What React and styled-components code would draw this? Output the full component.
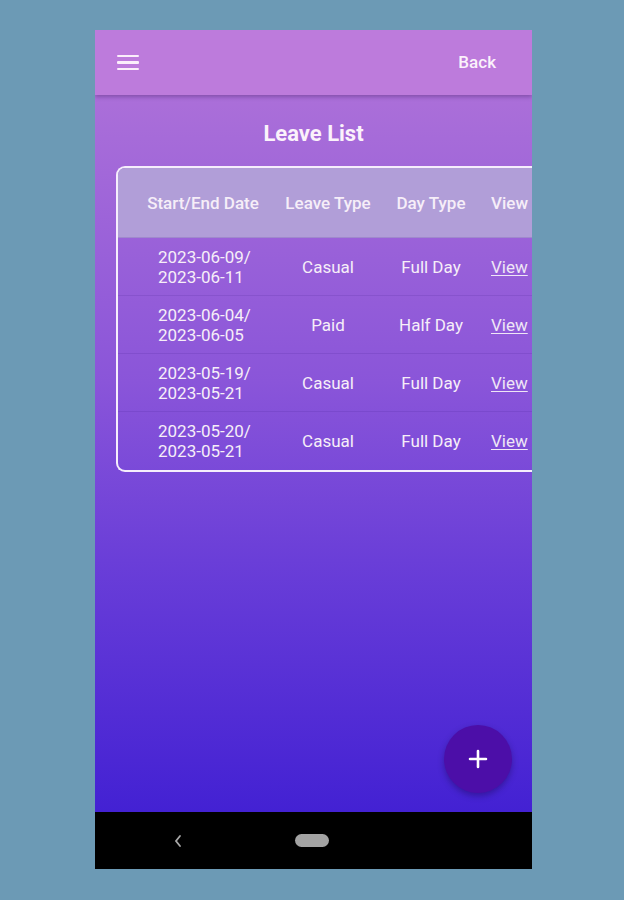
import React from "react";
import styled, { createGlobalStyle } from "styled-components";

const Global = createGlobalStyle`
  html, body { margin: 0; padding: 0; background: #6c9ab5; }
  body { font-family: Roboto, "Noto Sans", sans-serif; }
`;

const Page = styled.div`
  padding: 30px 0 0 95px;
  height: 870px;
  box-sizing: border-box;
`;

const Phone = styled.div`
  width: 437px;
  height: 839px;
  display: flex;
  flex-direction: column;
  overflow: hidden;
  background: #000;
`;

const Header = styled.header`
  height: 65px;
  flex: none;
  background: #bd7bdc;
  display: flex;
  align-items: center;
  justify-content: space-between;
  padding: 0 36px 0 22px;
  box-shadow: 0 2px 4px rgba(60, 20, 90, 0.35);
  position: relative;
  z-index: 1;
`;

const MenuButton = styled.div`
  width: 22px;
  display: flex;
  flex-direction: column;
  gap: 4px;
  & span {
    display: block;
    height: 2.5px;
    border-radius: 1px;
    background: #fbeefb;
  }
`;

const BackText = styled.span`
  color: #fbf2fb;
  font-size: 17px;
  font-weight: 500;
  margin-top: -2px;
`;

const Content = styled.main`
  flex: 1;
  position: relative;
  background: linear-gradient(180deg, #ab6fd9 0%, #8a55d9 40%, #6a3ed8 65%, #4321d3 100%);
  display: flex;
  flex-direction: column;
  align-items: flex-start;
`;

const Title = styled.h1`
  align-self: stretch;
  margin: 26px 0 0;
  text-align: center;
  color: #fbf2fb;
  font-size: 22px;
  font-weight: 700;
  line-height: 26px;
`;

const TableWrap = styled.div`
  margin: 19px 0 0 21px;
  border: 2px solid #f6eefc;
  border-right: none;
  border-radius: 9px 0 0 9px;
  overflow: hidden;
  width: 440px;
  flex: none;
`;

const Row = styled.div`
  display: flex;
  align-items: center;
  padding-left: 16px;
  height: ${(p) => (p.$head ? "70px" : "58px")};
  background: ${(p) => (p.$head ? "#b19ed8" : "transparent")};
  border-bottom: ${(p) => (p.$last ? "none" : "1px solid rgba(70, 30, 140, 0.16)")};
  box-sizing: border-box;
`;

const Cell = styled.div`
  flex: none;
  width: ${(p) => p.$w}px;
  text-align: ${(p) => (p.$left ? "left" : "center")};
  padding-left: ${(p) => (p.$left ? "13px" : "0")};
  box-sizing: border-box;
  color: #f6eef8;
  font-size: 17px;
  font-weight: ${(p) => (p.$head ? 500 : 400)};
  line-height: 20px;
  white-space: nowrap;
`;

const DateCell = styled(Cell)`
  padding-left: 24px;
  text-align: left;
`;

const ViewLink = styled.a`
  color: #efe6f6;
  text-decoration: underline;
  text-underline-offset: 2px;
  font-size: 17px;
`;

const Fab = styled.button`
  position: absolute;
  right: 20px;
  bottom: 19px;
  width: 68px;
  height: 68px;
  border-radius: 50%;
  border: none;
  background: #4c0ea8;
  box-shadow: 0 3px 6px rgba(20, 0, 60, 0.35);
  display: flex;
  align-items: center;
  justify-content: center;
  padding: 0;
`;

const NavBar = styled.nav`
  height: 57px;
  flex: none;
  background: #000;
  display: flex;
  align-items: center;
  padding-left: 78px;
  gap: 112px;
`;

const HomePill = styled.div`
  width: 34px;
  height: 13px;
  border-radius: 7px;
  background: #a3a3a3;
`;

const cols = [138, 112, 94, 64];

const rows = [
  ["2023-06-09/", "2023-06-11", "Casual", "Full Day"],
  ["2023-06-04/", "2023-06-05", "Paid", "Half Day"],
  ["2023-05-19/", "2023-05-21", "Casual", "Full Day"],
  ["2023-05-20/", "2023-05-21", "Casual", "Full Day"],
];

export default function App() {
  return (
    <>
      <Global />
      <Page>
        <Phone>
          <Header>
            <MenuButton>
              <span />
              <span />
              <span />
            </MenuButton>
            <BackText>Back</BackText>
          </Header>
          <Content>
            <Title>Leave List</Title>
            <TableWrap>
              <Row $head>
                <Cell $head $w={cols[0]}>Start/End Date</Cell>
                <Cell $head $w={cols[1]}>Leave Type</Cell>
                <Cell $head $w={cols[2]}>Day Type</Cell>
                <Cell $head $left $w={cols[3]}>View</Cell>
              </Row>
              {rows.map((r, i) => (
                <Row key={i} $last={i === rows.length - 1}>
                  <DateCell $w={cols[0]}>
                    {r[0]}
                    <br />
                    {r[1]}
                  </DateCell>
                  <Cell $w={cols[1]}>{r[2]}</Cell>
                  <Cell $w={cols[2]}>{r[3]}</Cell>
                  <Cell $left $w={cols[3]}>
                    <ViewLink>View</ViewLink>
                  </Cell>
                </Row>
              ))}
            </TableWrap>
            <Fab aria-label="add">
              <svg width="20" height="20" viewBox="0 0 20 20">
                <path d="M10 2v16M2 10h16" stroke="#fff" strokeWidth="2.6" strokeLinecap="round" />
              </svg>
            </Fab>
          </Content>
          <NavBar>
            <svg width="10" height="16" viewBox="0 0 10 16">
              <path d="M7 3L3 8l4 5" stroke="#a8a8a8" strokeWidth="1.8" fill="none" strokeLinecap="round" />
            </svg>
            <HomePill />
          </NavBar>
        </Phone>
      </Page>
    </>
  );
}
